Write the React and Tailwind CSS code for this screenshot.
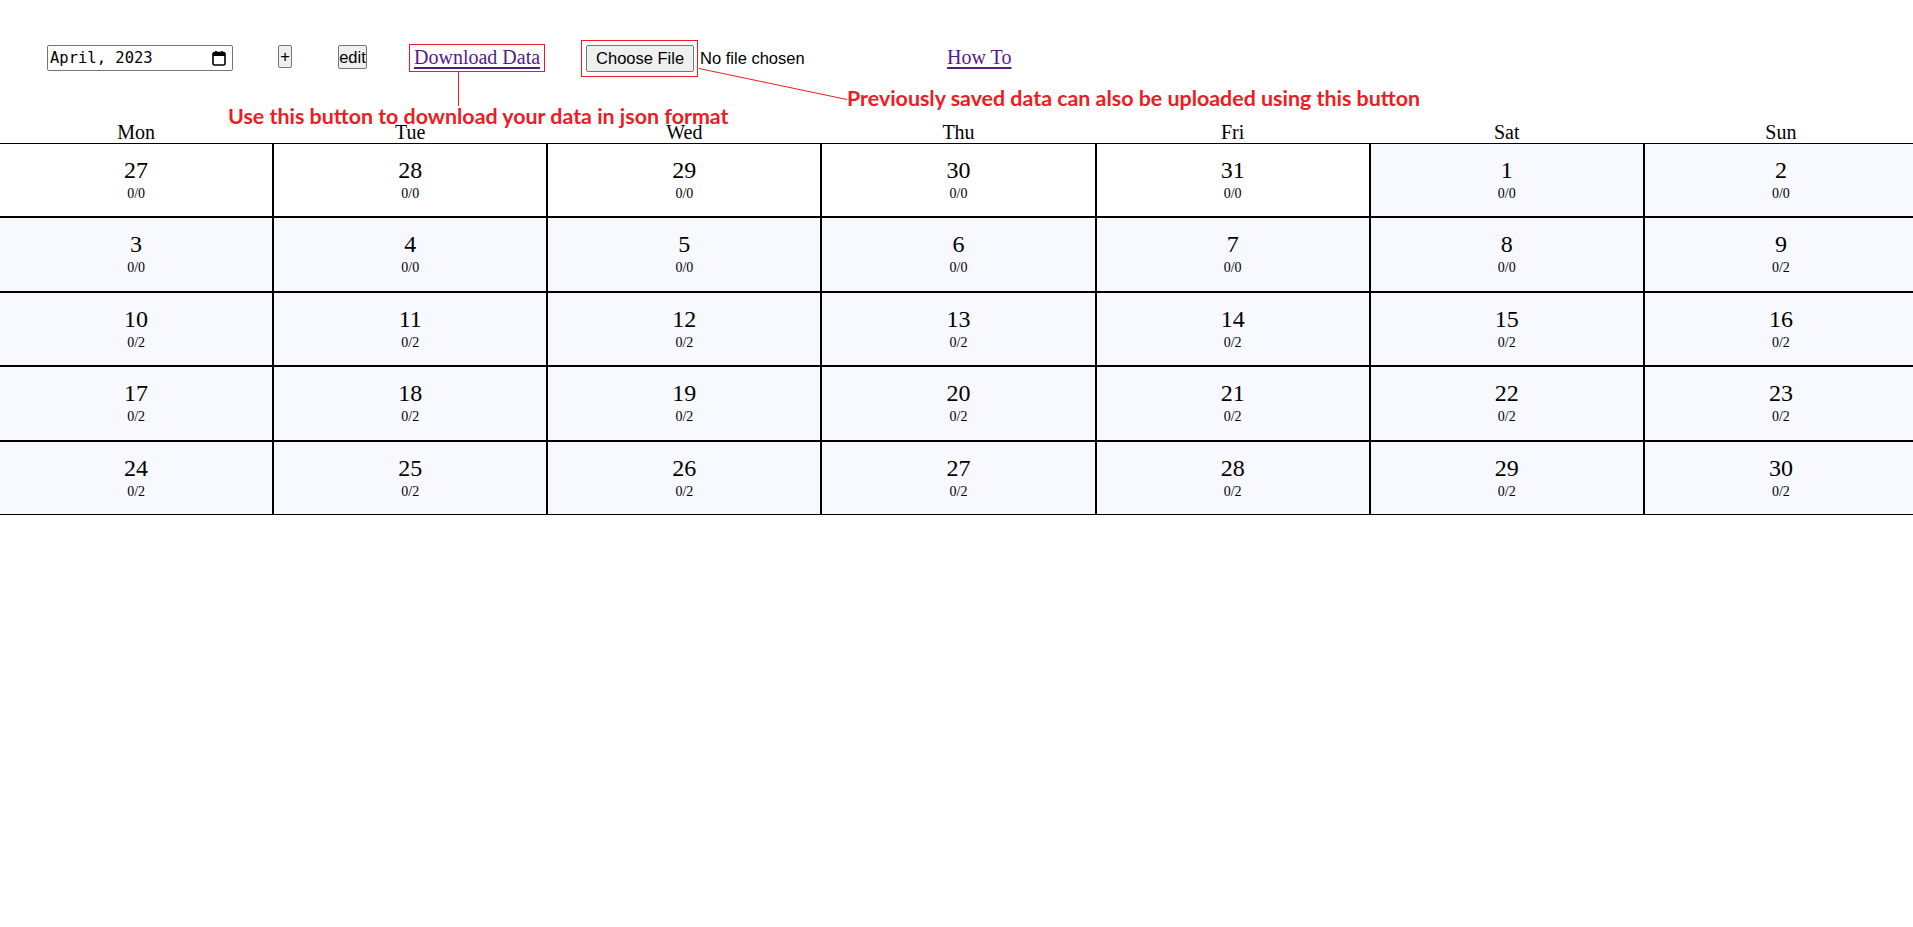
import React from 'react';

const WEEKDAYS = ['Mon', 'Tue', 'Wed', 'Thu', 'Fri', 'Sat', 'Sun'];

const buildDays = () => {
  const cells = [];
  // tail of March
  for (let d = 27; d <= 31; d++) cells.push({ day: d, score: '0/0', current: false });
  for (let d = 1; d <= 30; d++) cells.push({ day: d, score: d < 9 ? '0/0' : '0/2', current: true });
  return cells;
};

const CalendarIcon = () => (
  <svg width="14" height="15" viewBox="0 0 14 15" className="block">
    <rect x="1" y="1.5" width="12" height="12.5" rx="1.5" fill="none" stroke="#000" strokeWidth="1.6" />
    <rect x="1" y="1.5" width="12" height="3.5" fill="#000" />
    <rect x="3.2" y="0" width="1.6" height="2.5" fill="#000" />
    <rect x="9.2" y="0" width="1.6" height="2.5" fill="#000" />
  </svg>
);

const Annotations = () => (
  <>
    {/* download box + pointer */}
    <div className="absolute left-[409px] top-[44px] w-[136px] h-[28px] border border-[#ed1c24] pointer-events-none" />
    <div className="absolute left-[458px] top-[72px] w-px h-[34px] bg-[#ed1c24]" />
    <div className="absolute left-[228px] top-[104px] text-[21.4px] leading-[24px] font-bold text-[#ed1c24] whitespace-nowrap font-['Lato','Open_Sans',sans-serif]">
      Use this button to download your data in json format
    </div>

    {/* upload box + pointer */}
    <div className="absolute left-[581px] top-[40px] w-[117px] h-[37px] border border-[#ed1c24] pointer-events-none" />
    <svg className="absolute left-[690px] top-[60px]" width="170" height="50">
      <line x1="9" y1="8.5" x2="157" y2="39.5" stroke="#ed1c24" strokeWidth="1" />
    </svg>
    <div className="absolute left-[847px] top-[86px] text-[21.4px] leading-[24px] font-bold text-[#ed1c24] whitespace-nowrap font-['Lato','Open_Sans',sans-serif]">
      Previously saved data can also be uploaded using this button
    </div>
  </>
);

const Toolbar = () => (
  <div className="h-[121px] pt-[45px] pl-[47px] flex items-start">
    <div className="w-[186px] h-[26px] border border-[#767676] rounded-[2px] bg-white flex items-center justify-between pl-[2px] pr-[6px]">
      <span className="text-[15.5px] leading-[18px] text-black font-['DejaVu_Sans_Mono',monospace]">April, 2023</span>
      <CalendarIcon />
    </div>

    <button className="ml-[45px] w-[14px] h-[23px] border border-[#767676] rounded-[2px] bg-[#efefef] text-[16.5px] leading-[19px] text-black font-['Liberation_Sans',Arial,sans-serif] flex items-center justify-center">
      +
    </button>

    <button className="ml-[46px] w-[29px] h-[24px] border border-[#767676] rounded-[2px] bg-[#efefef] text-[16.5px] leading-[19px] text-black font-['Liberation_Sans',Arial,sans-serif] flex items-center justify-center">
      edit
    </button>

    <a href="#" className="ml-[47px] mt-[1px] text-[20px] leading-[22px] text-[#551a8b] underline underline-offset-[3px] font-['Liberation_Serif','Times_New_Roman',serif]">
      Download Data
    </a>

    <div className="ml-[46px] w-[316px] flex items-center">
      <span className="w-[108px] h-[27px] border border-[#767676] rounded-[2px] bg-[#efefef] text-[16.5px] leading-[19px] text-black font-['Liberation_Sans',Arial,sans-serif] flex items-center justify-center">
        Choose File
      </span>
      <span className="ml-[6px] text-[16.5px] leading-[19px] text-black font-['Liberation_Sans',Arial,sans-serif]">No file chosen</span>
    </div>

    <a href="#" className="ml-[45px] mt-[1px] text-[20px] leading-[22px] text-[#551a8b] underline underline-offset-[3px] font-['Liberation_Serif','Times_New_Roman',serif]">
      How To
    </a>
  </div>
);

const App = () => {
  const days = buildDays();

  return (
    <div className="relative min-h-screen bg-white overflow-hidden font-['Liberation_Serif','Times_New_Roman',serif] text-black">
      <Toolbar />

      <div className="-ml-px w-[1919px] grid grid-cols-7">
        {WEEKDAYS.map((w) => (
          <div key={w} className="text-center text-[20px] leading-[22px]">{w}</div>
        ))}
      </div>

      <div className="-ml-px w-[1919px] grid grid-cols-7">
        {days.map((c, i) => (
          <div
            key={i}
            className={`h-[74.4px] border border-black text-center pt-[12px] ${c.current ? 'bg-[#f8f8ff]' : 'bg-white'}`}
          >
            <div className="text-[24px] leading-[28px]">{c.day}</div>
            <div className="mt-[2px] text-[14px] leading-[15px]">{c.score}</div>
          </div>
        ))}
      </div>

      <Annotations />
    </div>
  );
};

export default App;
